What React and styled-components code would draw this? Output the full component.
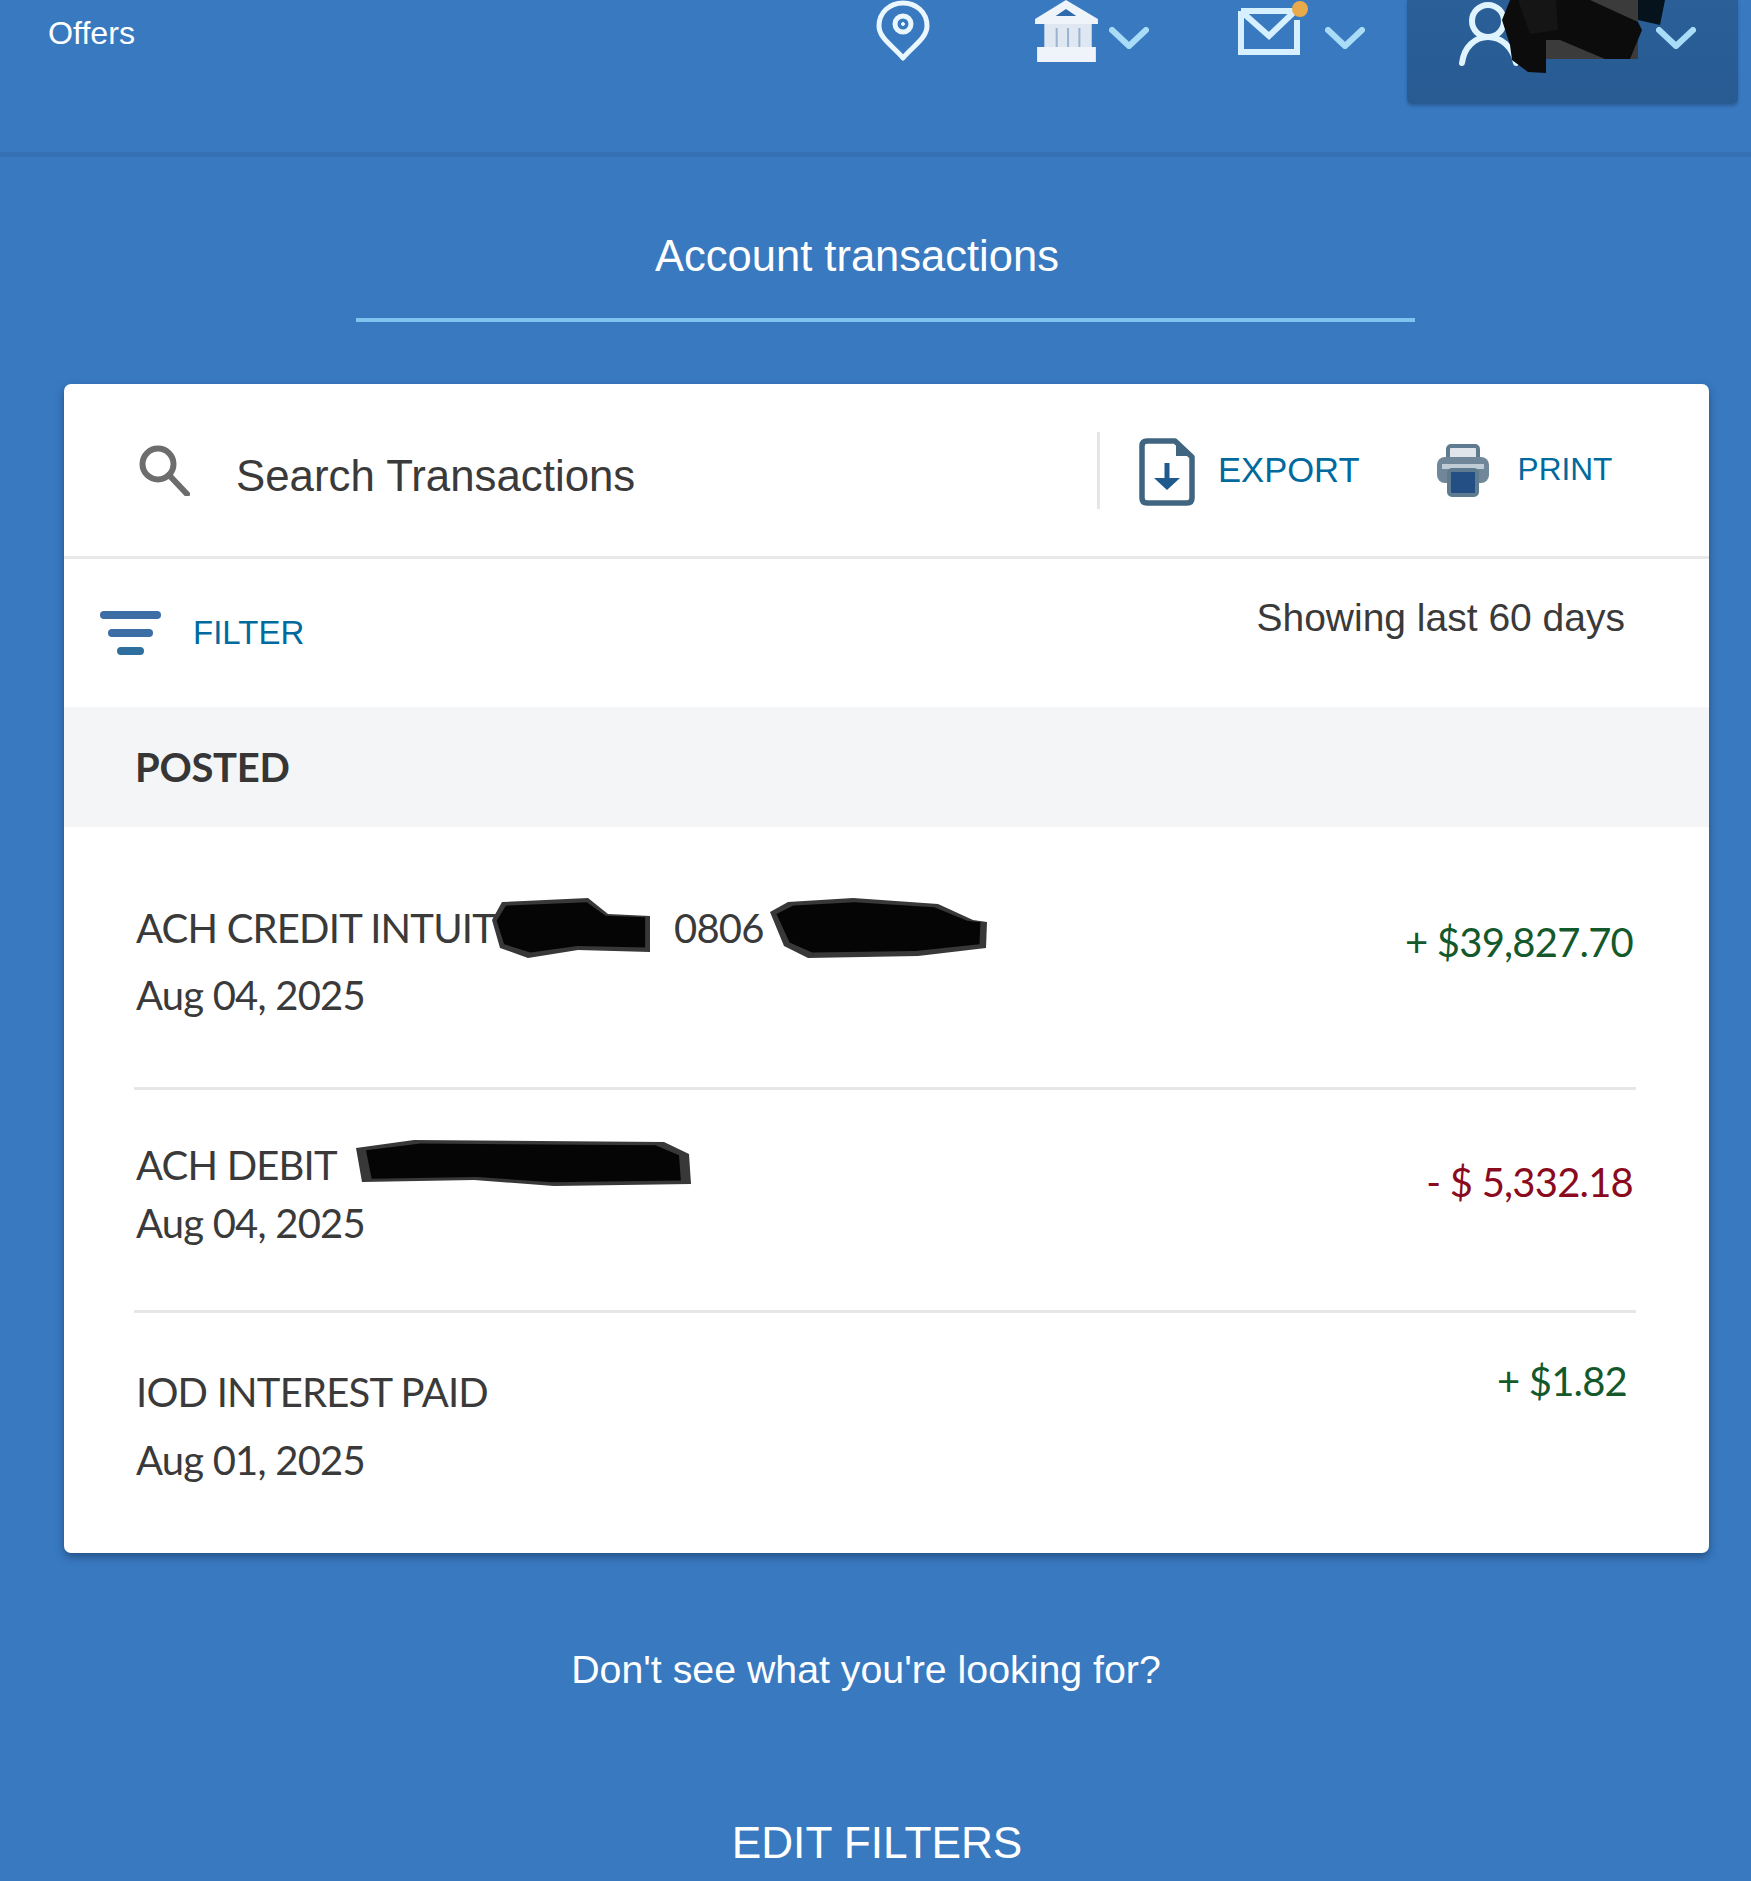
import React from 'react'
import styled, { createGlobalStyle } from 'styled-components'

const GlobalStyle = createGlobalStyle`
  html, body {
    margin: 0;
    padding: 0;
    background: #3979c0;
  }
  * {
    box-sizing: border-box;
  }
`

const Page = styled.div`
  width: 1751px;
  height: 1881px;
  overflow: hidden;
  background: #3979c0;
  font-family: "Liberation Sans", Arial, sans-serif;
`

const Header = styled.div`
  height: 157px;
  display: flex;
  align-items: flex-start;
  padding: 0 13px 0 48px;
  border-bottom: 5px solid #3570b4;
`

const OffersLink = styled.span`
  color: #fff;
  font-size: 32.2px;
  line-height: 67px;
`

const Nav = styled.div`
  margin-left: auto;
  display: flex;
  align-items: flex-start;
`

const NavGroup = styled.div`
  display: flex;
  align-items: flex-start;
  margin-left: ${props => props.$left || 0}px;
`

const AccountBox = styled.div`
  position: relative;
  width: 331px;
  height: 104px;
  margin-left: 42px;
  padding-left: 50px;
  display: flex;
  justify-content: space-between;
  align-items: flex-start;
  background: linear-gradient(#2a5f98, #285b92);
  border-radius: 0 0 5px 5px;
  box-shadow: 0 2px 3px rgba(30, 70, 120, 0.5);
`

const Icon = styled.svg`
  flex: none;
  margin-top: ${props => props.$top || 0}px;
  filter: blur(0.6px);
`

const Chevron = styled.svg`
  width: 40px;
  height: 22px;
  margin: 27px ${props => props.$right || 0}px 0 ${props => props.$left || 13}px;
  fill: none;
  stroke: #a9dcf7;
  stroke-width: 6;
  stroke-linecap: round;
  stroke-linejoin: round;
  filter: blur(0.6px);
`

const NameRedaction = styled.svg`
  position: absolute;
  left: 93px;
  top: 0;
  width: 166px;
  height: 74px;
`

const Title = styled.div`
  width: 1059px;
  height: 165px;
  margin-left: 356px;
  padding: 74px 57px 0 0;
  border-bottom: 4px solid #7fc3ee;
  color: #fff;
  font-size: 43.5px;
  line-height: 50px;
  text-align: center;
`

const Card = styled.div`
  width: 1645px;
  height: 1169px;
  margin: 62px 0 0 64px;
  background: #fff;
  border-radius: 7px;
  overflow: hidden;
  box-shadow: 0 4px 8px rgba(25, 60, 105, 0.65);
`

const SearchRow = styled.div`
  height: 175px;
  display: flex;
  align-items: center;
  padding-left: 74px;
  border-bottom: 3px solid #e8e8e8;
`

const SearchText = styled.span`
  margin: 12px 0 0 46px;
  color: #3a3a3a;
  font-size: 43.8px;
  line-height: 50px;
`

const Actions = styled.div`
  margin-left: auto;
  height: 77px;
  width: 612px;
  display: flex;
  align-items: center;
  padding-left: 38px;
  border-left: 3px solid #e6e6e6;
`

const ActionGroup = styled.div`
  display: flex;
  align-items: center;
  margin-left: ${props => props.$left || 0}px;
`

const ActionLink = styled.span`
  margin: ${props => props.$top || 0}px 0 0 ${props => props.$left}px;
  color: #006a9e;
  font-size: ${props => props.$size}px;
  line-height: 40px;
`

const FilterRow = styled.div`
  height: 148px;
  display: flex;
  justify-content: space-between;
  align-items: flex-start;
  padding: 52px 84px 0 36px;
`

const FilterLink = styled.div`
  display: flex;
  align-items: center;
  gap: 32px;
`

const FilterLabel = styled.span`
  margin-top: -3px;
  color: #006a9e;
  font-size: 33px;
  line-height: 46px;
`

const RangeText = styled.span`
  margin-top: -16px;
  color: #3a3a3a;
  font-size: 39px;
  line-height: 46px;
`

const SectionBand = styled.div`
  height: 120px;
  display: flex;
  align-items: center;
  padding-left: 71px;
  background: #f4f5f7;
  color: #363636;
  font-family: Lato, sans-serif;
  font-size: 40px;
  font-weight: 700;
  letter-spacing: -0.3px;
`

const Rows = styled.div`
  margin: 0 73px 0 70px;
`

const Row = styled.div`
  height: ${props => props.$height}px;
  display: flex;
  justify-content: space-between;
  align-items: flex-start;
  padding: 0 ${props => props.$inset || 3}px 0 2px;
  border-bottom: ${props => (props.$last ? 'none' : '3px solid #e6e6e6')};
  font-family: Lato, sans-serif;
  font-size: 40px;
  letter-spacing: -0.8px;
  line-height: 50px;
  color: #3a3a3a;
`

const RowInfo = styled.div`
  display: flex;
  flex-direction: column;
  padding-top: ${props => props.$top}px;
  gap: ${props => props.$gap}px;
`

const RowTitle = styled.div`
  display: flex;
  align-items: center;
  height: 50px;
  white-space: nowrap;
`

const Amount = styled.span`
  padding-top: ${props => props.$top}px;
  color: ${props => (props.$debit ? '#8a0a1e' : '#14592c')};
`

const Redaction = styled.svg`
  flex: none;
  width: ${props => props.$width}px;
  height: ${props => props.$height}px;
  margin: -8px ${props => props.$right || 0}px -8px ${props => props.$left || 0}px;
`

const HelpText = styled.div`
  width: 1732px;
  margin-top: 93px;
  color: #fff;
  font-size: 39.3px;
  line-height: 46px;
  text-align: center;
`

const EditFilters = styled.div`
  width: 1754px;
  margin-top: 126px;
  color: #fff;
  font-size: 44.2px;
  line-height: 50px;
  text-align: center;
`

function PinIcon() {
  return (
    <Icon width="56" height="62" viewBox="0 0 56 62" fill="none" stroke="#eaf7ff" strokeWidth="5">
      <path d="M28 58 C18 46 4 38 4 26 C4 12 15 3 28 3 C41 3 52 12 52 26 C52 38 38 46 28 58 Z" strokeLinejoin="round" />
      <circle cx="28" cy="24" r="8" />
      <circle cx="28" cy="24" r="1.5" fill="#eaf7ff" strokeWidth="1" />
    </Icon>
  )
}

function BankIcon() {
  return (
    <Icon width="66" height="63" viewBox="0 0 64 63" preserveAspectRatio="none" fill="#eef4fa">
      <path d="M31 0 L62 19 L62 24 L1 24 L1 19 Z" />
      <path d="M31 9 L41 16 L21 16 Z" fill="#2f6aab" />
      <path d="M10 24 H56 V50 H10 Z" fill="#dfe8f2" />
      <path d="M22 28 V48 M33 28 V48 M44 28 V48" stroke="#9db4cf" strokeWidth="2" />
      <path d="M3 47 H60 V62 H3 Z" />
    </Icon>
  )
}

function MailIcon() {
  return (
    <Icon width="72" height="58" viewBox="0 0 72 58" fill="none" stroke="#d7f0ff" strokeWidth="6">
      <path d="M3 11 H55 M3 11 V52 H59 V20" />
      <path d="M4 12 L31 36 L56 12" />
      <circle cx="62" cy="9" r="8" fill="#e9aa4c" stroke="none" />
    </Icon>
  )
}

function PersonIcon() {
  return (
    <Icon width="66" height="68" viewBox="0 0 66 68" fill="none" stroke="#dff4ff" strokeWidth="6" strokeLinecap="round">
      <circle cx="31" cy="21" r="16" />
      <path d="M5 63 C7 47 18 37 31 37 C44 37 56 47 59 63" />
    </Icon>
  )
}

function SearchIcon() {
  return (
    <Icon width="52" height="52" viewBox="0 0 52 52" fill="none" stroke="#6d6d6d" strokeWidth="6" strokeLinecap="round">
      <circle cx="20" cy="20" r="15.5" />
      <path d="M31 31 L49 50" />
    </Icon>
  )
}

function ExportIcon() {
  return (
    <Icon $top={4} width="58" height="68" viewBox="0 0 58 68" fill="none">
      <path d="M9 3 H37 L54 19 V60 Q54 65 49 65 H9 Q4 65 4 60 V8 Q4 3 9 3 Z" stroke="#3f6580" strokeWidth="5.5" strokeLinejoin="round" />
      <path d="M38 3 V18 H54 Z" fill="#3f6580" />
      <path d="M29 25 V42" stroke="#1f5a8c" strokeWidth="5" />
      <path d="M16 40 H42 L29 52 Z" fill="#1f5a8c" />
    </Icon>
  )
}

function PrintIcon() {
  return (
    <Icon width="54" height="54" viewBox="0 0 54 54">
      <rect x="12" y="3" width="30" height="18" rx="3" fill="#dfe5ea" stroke="#5f7b90" strokeWidth="4" />
      <rect x="1" y="14" width="52" height="26" rx="8" fill="#6f8798" />
      <rect x="6" y="21" width="42" height="5" fill="#c0ccd5" />
      <rect x="13" y="27" width="28" height="25" rx="3" fill="#234f85" stroke="#5f7b90" strokeWidth="4" />
    </Icon>
  )
}

function FilterIcon() {
  return (
    <Icon width="61" height="46" viewBox="0 0 61 46" fill="#3c6da5">
      <rect x="0" y="0" width="61" height="8" rx="4" />
      <rect x="8" y="18" width="45" height="8" rx="4" />
      <rect x="17" y="36" width="27" height="8" rx="4" fill="#2f6f9e" />
    </Icon>
  )
}

function Scribble({ width, height, left, right, d }) {
  return (
    <Redaction $width={width} $height={height} $left={left} $right={right} viewBox={`0 0 ${width} ${height}`}>
      <path d={d} fill="#383838" />
      <path d={d} fill="#050505" transform={`translate(${width * 0.03} ${height * 0.07}) scale(0.94 0.84)`} />
    </Redaction>
  )
}

const chevronPath = 'M3 3 L20 19 L37 3'

function App() {
  return (
    <Page>
      <GlobalStyle />
      <Header>
        <OffersLink>Offers</OffersLink>
        <Nav>
          <NavGroup><PinIcon /></NavGroup>
          <NavGroup $left={103}>
            <BankIcon />
            <Chevron $left={9} viewBox="0 0 40 22"><path d={chevronPath} /></Chevron>
          </NavGroup>
          <NavGroup $left={89}>
            <MailIcon />
            <Chevron $left={15} viewBox="0 0 40 22"><path d={chevronPath} /></Chevron>
          </NavGroup>
          <AccountBox>
            <PersonIcon />
            <Chevron $right={42} viewBox="0 0 40 22"><path d={chevronPath} /></Chevron>
            <NameRedaction viewBox="0 0 166 74">
              <path d="M20 0 H138 V59 H20 Z" fill="#3b3b3b" />
              <path d="M138 0 H165 L160 25 L138 20 Z" fill="#06121c" />
              <path d="M2 20 L10 0 L90 0 L138 22 L142 30 L130 59 L105 59 L60 40 L46 40 L46 73 L28 72 L12 60 L10 45 Z" fill="#0c0c0c" />
              <path d="M18 0 H56 L58 30 L30 34 Z" fill="#151515" />
            </NameRedaction>
          </AccountBox>
        </Nav>
      </Header>

      <Title>Account transactions</Title>

      <Card>
        <SearchRow>
          <SearchIcon />
          <SearchText>Search Transactions</SearchText>
          <Actions>
            <ActionGroup>
              <ExportIcon />
              <ActionLink $left={22} $size={34.6}>EXPORT</ActionLink>
            </ActionGroup>
            <ActionGroup $left={76}>
              <PrintIcon />
              <ActionLink $left={28} $top={-3} $size={31.6}>PRINT</ActionLink>
            </ActionGroup>
          </Actions>
        </SearchRow>

        <FilterRow>
          <FilterLink>
            <FilterIcon />
            <FilterLabel>FILTER</FilterLabel>
          </FilterLink>
          <RangeText>Showing last 60 days</RangeText>
        </FilterRow>

        <SectionBand>POSTED</SectionBand>

        <Rows>
          <Row $height={263}>
            <RowInfo $top={76} $gap={17}>
              <RowTitle>
                ACH CREDIT INTUIT
                <Scribble
                  width={162}
                  height={60}
                  left={-7}
                  right={24}
                  d="M4 22 L14 4 L100 0 L120 16 L162 18 L162 54 L90 52 L40 60 L12 50 Z"
                />
                0806
                <Scribble
                  width={219}
                  height={60}
                  left={4}
                  d="M2 14 L20 4 L85 0 L170 6 L205 22 L219 24 L218 50 L150 58 L40 60 L16 48 Z"
                />
              </RowTitle>
              <span>Aug 04, 2025</span>
            </RowInfo>
            <Amount $top={90}>+ $39,827.70</Amount>
          </Row>
          <Row $height={223}>
            <RowInfo $top={50} $gap={8}>
              <RowTitle>
                ACH DEBIT
                <Scribble
                  width={337}
                  height={50}
                  left={17}
                  d="M2 8 L60 0 L310 2 L335 14 L337 44 L200 46 L120 40 L8 42 Z"
                />
              </RowTitle>
              <span>Aug 04, 2025</span>
            </RowInfo>
            <Amount $debit $top={67}>- $ 5,332.18</Amount>
          </Row>
          <Row $height={238} $last $inset={9}>
            <RowInfo $top={54} $gap={18}>
              <RowTitle>IOD INTEREST PAID</RowTitle>
              <span>Aug 01, 2025</span>
            </RowInfo>
            <Amount $top={43}>+ $1.82</Amount>
          </Row>
        </Rows>
      </Card>

      <HelpText>Don't see what you're looking for?</HelpText>
      <EditFilters>EDIT FILTERS</EditFilters>
    </Page>
  )
}

export default App
